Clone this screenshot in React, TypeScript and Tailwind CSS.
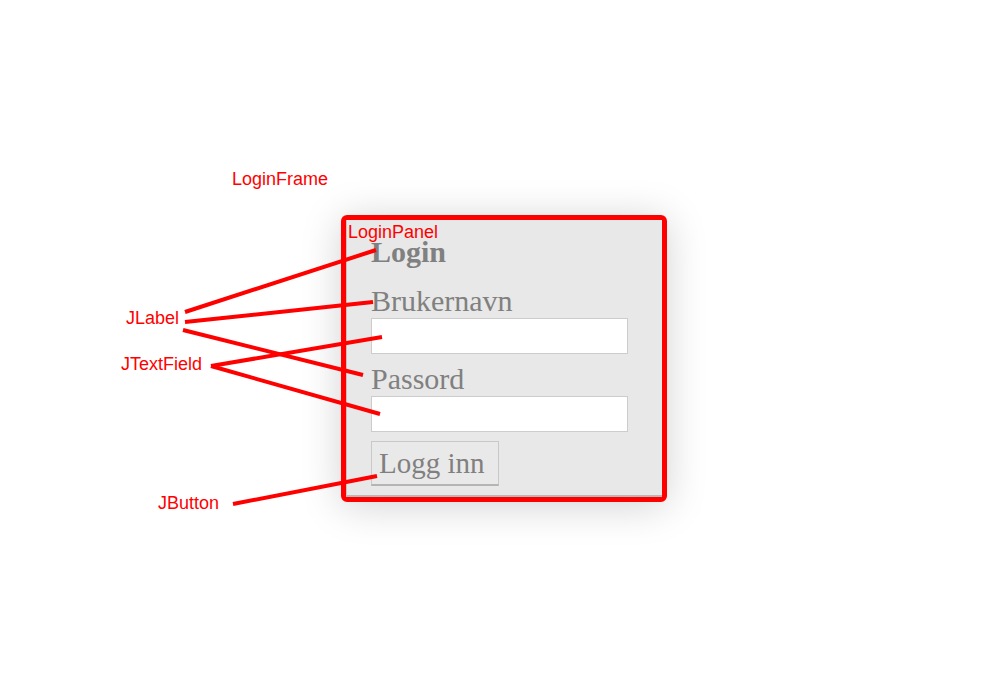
const serif = { fontFamily: '"Liberation Serif", "Times New Roman", serif' }

function Annotations() {
  const lines: [number, number, number, number][] = [
    [185, 312, 376, 250],
    [185, 322, 373, 302],
    [183, 330, 363, 375],
    [211, 366, 382, 337],
    [211, 366, 380, 414],
    [233, 504, 377, 476],
  ]
  return (
    <svg className="pointer-events-none absolute inset-0" width={1000} height={700}>
      {lines.map(([x1, y1, x2, y2], i) => (
        <line key={i} x1={x1} y1={y1} x2={x2} y2={y2} stroke="#ff0000" strokeWidth={4} />
      ))}
    </svg>
  )
}

function Label({ text, className }: { text: string; className: string }) {
  return (
    <div
      className={`absolute text-[18px] leading-none text-[#ff0000] ${className}`}
      style={{ fontFamily: '"Liberation Sans", Arial, sans-serif' }}
    >
      {text}
    </div>
  )
}

export default function App() {
  return (
    <div className="relative h-[700px] w-[1000px] overflow-hidden bg-white">
      <div className="pl-[341px] pt-[215px]">
        <div className="h-[287px] w-[326px] rounded-[6px] border-[5px] border-[#ff0000] shadow-[0_4px_40px_rgba(0,0,0,0.18)]">
          <div
            className="flex h-full flex-col border-b-2 border-l border-b-[#b8b8b8] border-l-[#c4c4c4] bg-[#e8e8e8] pl-[24px] pt-[18px] text-[#808080]"
            style={serif}
          >
            <div className="text-[30px] font-bold leading-[28px]">Login</div>
            <div className="mt-[20px] text-[30px] leading-[30px]">Brukernavn</div>
            <div className="mt-[2px] h-[36px] w-[257px] border border-[#cccccc] bg-white" />
            <div className="mt-[10px] text-[30px] leading-[30px]">Passord</div>
            <div className="mt-[2px] h-[36px] w-[257px] border border-[#cccccc] bg-white" />
            <div className="mt-[9px] h-[45px] w-[128px] border border-[#c8c8c8] border-b-2 border-b-[#b4b4b4] bg-[#e9e9e9] pl-[7px] pt-[7px] text-[29px] leading-[29px]">
              Logg inn
            </div>
          </div>
        </div>
      </div>
      <Label text="LoginFrame" className="left-[232px] top-[170px]" />
      <Label text="LoginPanel" className="left-[348px] top-[223px]" />
      <Label text="JLabel" className="left-[126px] top-[309px]" />
      <Label text="JTextField" className="left-[121px] top-[355px]" />
      <Label text="JButton" className="left-[158px] top-[494px]" />
      <Annotations />
    </div>
  )
}
